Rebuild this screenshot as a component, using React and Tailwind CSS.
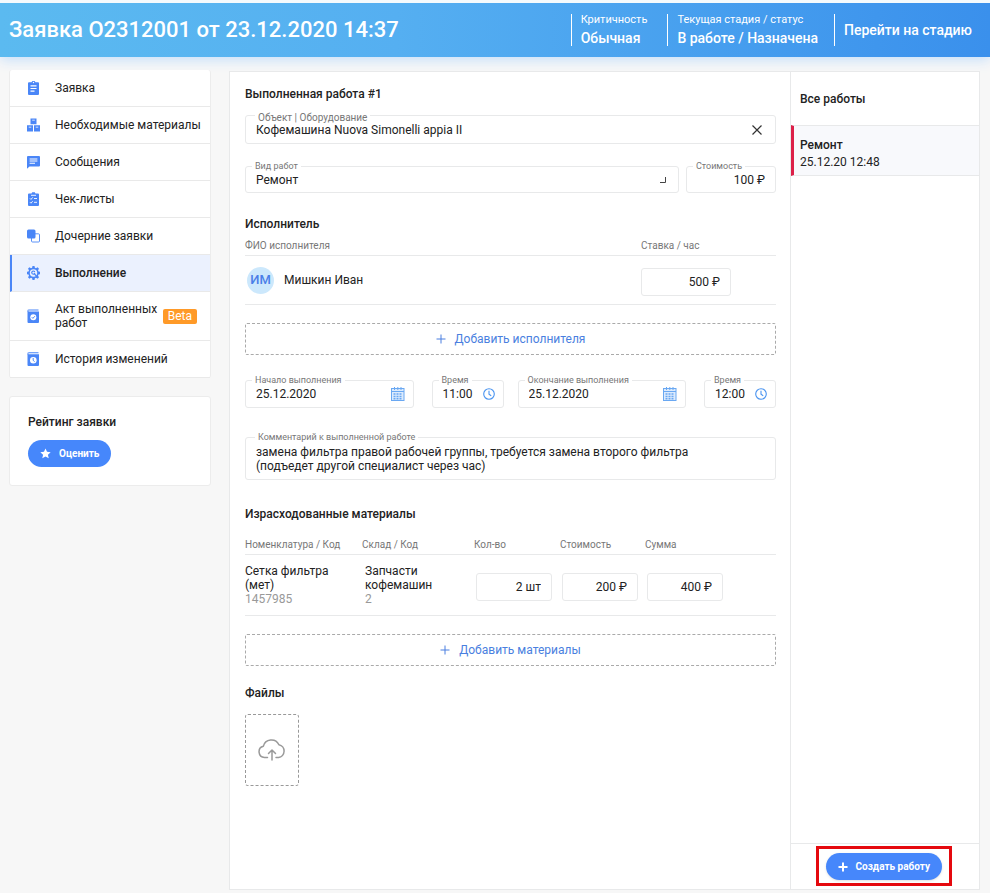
import React, { useState } from "react";

const icons = {
  request: (
    <g>
      <path fill="currentColor" fillRule="evenodd" d="M2 1.2h2.6a2 2 0 0 1 3.8 0H11a1 1 0 0 1 1 1V13a1 1 0 0 1-1 1H2a1 1 0 0 1-1-1V2.200a1 1 0 0 1 1-1zM6.500.8a.7.7 0 1 0 0 1.400a.7.7 0 0 0 0-1.400zM3.500 4.200v1.200h6V4.200zm0 2.700v1.200h6V6.900zm0 2.700v1.200h4V9.600z" />
    </g>
  ),
  materials: (
    <g fill="currentColor">
      <path fillRule="evenodd" d="M3.500.5h6v5.800h-6zM5.200 1.800v.8h2.600v-.8z" />
      <path fillRule="evenodd" d="M0 7.200h6v6.300H0zM1.700 8.700v.8h2.600v-.8z" />
      <path fillRule="evenodd" d="M7 7.200h6v6.300H7zM8.700 8.700v.8h2.600v-.8z" />
    </g>
  ),
  messages: (
    <path fill="currentColor" fillRule="evenodd" d="M1 1h11a1 1 0 0 1 1 1v8.500a1 1 0 0 1-1 1H2.500L0 13.800V2a1 1 0 0 1 1-1zM2.600 3.400v1h7.800v-1zm0 2.200v1h7.800v-1zm0 2.200v1h5.400v-1z" />
  ),
  checklist: (
    <g>
      <path fill="currentColor" d="M2 1.500h2.500L5.200.2h2.600l.7 1.300H11a1 1 0 0 1 1 1V13a1 1 0 0 1-1 1H2a1 1 0 0 1-1-1V2.500a1 1 0 0 1 1-1z" />
      <path fill="none" stroke="#fff" strokeWidth=".9" d="M4 3.300h5M3 6.400l1 1 1.700-2M7 6.500h3M3 10.200l1 1 1.700-2M7 10.300h3" />
    </g>
  ),
  children: (
    <g>
      <rect x="4.500" y="4.800" width="8" height="8.200" rx="1" fill="#fff" stroke="currentColor" strokeWidth=".9" />
      <rect x="0" y=".5" width="8.500" height="9" rx="1.500" fill="currentColor" />
    </g>
  ),
  work: (
    <g>
      <path fill="currentColor" d="M5.500 0h2l.4 1.800 1.100.5 1.600-1 1.400 1.400-1 1.600.5 1.100 1.500.4v2.400l-1.500.4-.5 1.100 1 1.600-1.400 1.400-1.600-1-1.100.5-.4 1.800h-2l-.4-1.800-1.100-.5-1.600 1L1 11.300l1-1.600-.5-1.100L0 8.200V5.800l1.500-.4.5-1.100-1-1.600 1.400-1.400 1.600 1 1.100-.5z" />
      <circle cx="6.500" cy="7" r="3.700" fill="#ebf1fe" />
      <path fill="none" stroke="currentColor" strokeWidth="1.200" strokeLinecap="round" d="M7.200 7.700l2.200 2.300M7.500 5.500a1.600 1.600 0 1 0 .2 2" />
    </g>
  ),
  act: (
    <g>
      <path fill="currentColor" d="M1.500.5h10v1h-10zM.5 2.500h11.500V13a1 1 0 0 1-1 1H1.500a1 1 0 0 1-1-1z" />
      <path fill="currentColor" d="M.5 1.500a1 1 0 0 1 1-1v2.500h-1z" />
      <circle cx="6.300" cy="8.200" r="3" fill="#fff" />
      <path fill="none" stroke="currentColor" strokeWidth="1" d="M4.800 8.200l1.100 1.200 2-2.200" />
    </g>
  ),
  history: (
    <g>
      <path fill="currentColor" d="M1.500.3h10v1h-10zM.5 2.300h11.500V13a1 1 0 0 1-1 1H1.500a1 1 0 0 1-1-1z" />
      <path fill="currentColor" d="M.5 1.300a1 1 0 0 1 1-1v2.500h-1z" />
      <circle cx="6.300" cy="8.200" r="3.300" fill="#fff" />
      <path fill="none" stroke="currentColor" strokeWidth="1" d="M6.200 6v2.400l1.400 1.200" />
    </g>
  ),
};

const menu = [
  { icon: "request", text: "Заявка" },
  { icon: "materials", text: "Необходимые материалы" },
  { icon: "messages", text: "Сообщения" },
  { icon: "checklist", text: "Чек-листы" },
  { icon: "children", text: "Дочерние заявки" },
  { icon: "work", text: "Выполнение", active: true },
  { icon: "act", text: "Акт выполненных работ", badge: "Beta" },
  { icon: "history", text: "История изменений" },
];

function MenuItem({ item }) {
  const tone = item.active
    ? "border-l-2 border-l-[#4a86f7] bg-[#ebf1fe] pl-[15px] font-medium"
    : "pl-[17px]";
  const height = item.badge ? "h-[49px] pr-[13px]" : "h-[37px] pr-2";
  return (
    <li>
      <a
        href="#"
        aria-current={item.active ? "page" : undefined}
        className={`flex items-center border-b border-[#e9e9e9] ${height} ${tone}`}
      >
        <svg viewBox="0 0 13 14" className="mr-[15px] h-[14px] w-[13px] shrink-0 text-[#4a86f7]">
          {icons[item.icon]}
        </svg>
        <span className="flex-1 leading-[14px]">{item.text}</span>
        {item.badge && (
          <span className="rounded-xs bg-[#ff9a28] px-[5px] text-xs leading-[15px] text-white">{item.badge}</span>
        )}
      </a>
    </li>
  );
}

const inputClass = "w-full min-w-0 bg-transparent outline-none";

function Field({ id, label, labelClass = "-top-[6px] left-[6px] text-[9px]", className = "", children }) {
  return (
    <div className={`relative flex items-center rounded-[3px] border border-[#e8e9ea] px-[10px] ${className}`}>
      <label
        htmlFor={id}
        className={`absolute bg-white px-[3px] leading-[11px] whitespace-nowrap text-[#777] ${labelClass}`}
      >
        {label}
      </label>
      {children}
    </div>
  );
}

function CalendarIcon() {
  return (
    <svg viewBox="0 0 14 14" className="mr-[-2px] h-[14px] w-[14px] shrink-0" fill="none" stroke="#6aa8f2">
      <rect x=".5" y="1.500" width="12.500" height="12" fill="#dcebfd" />
      <path d="M.5 4.500H13M3.500 0v3M6.800 0v3M10 0v3" />
      <path strokeWidth="1.500" strokeDasharray="2 1" d="M2.500 7h9M2.500 9.400h9M2.500 11.800h9" />
    </svg>
  );
}

function ClockIcon() {
  return (
    <svg viewBox="0 0 12 12" className="mr-[-2px] h-[12px] w-[12px] shrink-0" fill="none" stroke="#4a94f0" strokeWidth="1.100">
      <circle cx="6" cy="6" r="5.300" />
      <path d="M6 2.800v3.400l2.200 1.500" />
    </svg>
  );
}

function PlusIcon({ className }) {
  return (
    <svg viewBox="0 0 10 10" className={`h-[10px] w-[10px] ${className}`} fill="none" stroke="currentColor">
      <path d="M5 .5v9M.5 5h9" />
    </svg>
  );
}

function AddButton({ children }) {
  return (
    <button
      type="button"
      className="flex h-[32px] w-full items-center justify-center gap-[9px] rounded-xs border border-dashed border-[#aaa] text-[#4a7fe0]"
    >
      <PlusIcon className="stroke-1" />
      {children}
    </button>
  );
}

function AmountInput({ label, value, className }) {
  return (
    <input
      type="text"
      aria-label={label}
      defaultValue={value}
      className={`block h-[28px] rounded-[3px] border border-[#e8e9ea] bg-white px-[10px] text-right outline-none ${className}`}
    />
  );
}

function DateTime({ id, label, date, time }) {
  return (
    <div className="flex flex-1 gap-[18px]">
      <Field id={`${id}-date`} label={label} className="h-[28px] flex-1">
        <input id={`${id}-date`} type="text" defaultValue={date} className={inputClass} />
        <CalendarIcon />
      </Field>
      <Field id={`${id}-time`} label="Время" className="h-[28px] w-[72px]">
        <input id={`${id}-time`} type="text" defaultValue={time} className={inputClass} />
        <ClockIcon />
      </Field>
    </div>
  );
}

function WorkForm() {
  const [object, setObject] = useState("Кофемашина Nuova Simonelli appia II");
  const th = "pb-[4px] text-left align-bottom text-[10px] leading-[11px] font-normal text-[#777]";
  return (
    <form className="min-w-0 flex-1 pt-[14px] pr-[14px] pb-4 pl-[15px]">
      <h2 className="leading-[16px] font-medium">Выполненная работа #1</h2>
      <Field
        id="object"
        label="Объект | Оборудование"
        labelClass="-top-[4px] left-[9px] text-[10px]"
        className="mt-[13px] h-[29px]"
      >
        <input
          id="object"
          type="text"
          value={object}
          onChange={(e) => setObject(e.target.value)}
          className={inputClass}
        />
        <button type="button" aria-label="Очистить" onClick={() => setObject("")} className="px-[3px]">
          <svg viewBox="0 0 10 10" className="h-[10px] w-[10px]" fill="none" stroke="#333" strokeWidth="1.200">
            <path d="M.5.5l9 9M9.500.5l-9 9" />
          </svg>
        </button>
      </Field>
      <div className="mt-[22px] flex gap-[7px]">
        <Field id="kind" label="Вид работ" className="h-[27px] flex-1">
          <select id="kind" className={`${inputClass} appearance-none`}>
            <option>Ремонт</option>
          </select>
          <svg viewBox="0 0 6 6" className="mr-[2px] h-[6px] w-[6px] shrink-0" fill="none" stroke="#444">
            <path d="M5.500 0v5.500H0" />
          </svg>
        </Field>
        <Field id="price" label="Стоимость" className="h-[27px] w-[90px]">
          <input id="price" type="text" defaultValue="100 ₽" className={`${inputClass} text-right`} />
        </Field>
      </div>

      <h2 className="mt-[23px] leading-[16px] font-medium">Исполнитель</h2>
      <table className="mt-[8px] w-full table-fixed border-collapse">
        <thead>
          <tr className="border-b border-[#e8e9ea]">
            <th className={th}>ФИО исполнителя</th>
            <th className={`w-[135px] ${th}`}>Ставка / час</th>
          </tr>
        </thead>
        <tbody>
          <tr className="h-[49px] border-b border-[#e8e9ea]">
            <td>
              <div className="flex items-center gap-[10px] pl-[2px]">
                <span className="flex h-[27px] w-[27px] items-center justify-center rounded-full bg-[#cce8fc] text-[13px] font-medium text-[#4a7fe8]">
                  ИМ
                </span>
                Мишкин Иван
              </div>
            </td>
            <td className="pt-[3px]">
              <AmountInput label="Ставка / час" value="500 ₽" className="w-[90px]" />
            </td>
          </tr>
        </tbody>
      </table>
      <div className="mt-[18px]">
        <AddButton>Добавить исполнителя</AddButton>
      </div>

      <div className="mt-[25px] flex gap-[14px]">
        <DateTime id="start" label="Начало выполнения" date="25.12.2020" time="11:00" />
        <DateTime id="end" label="Окончание выполнения" date="25.12.2020" time="12:00" />
      </div>

      <Field
        id="comment"
        label="Комментарий к выполненной работе"
        labelClass="-top-[6px] left-[9px] text-[9px]"
        className="mt-[29px] h-[43px]"
      >
        <textarea
          id="comment"
          className="mt-[2px] h-[30px] w-full resize-none overflow-hidden bg-transparent leading-[14px] outline-none"
          defaultValue={"замена фильтра правой рабочей группы, требуется замена второго фильтра\n(подъедет другой специалист через час)"}
        />
      </Field>

      <h2 className="mt-[26px] leading-[16px] font-medium">Израсходованные материалы</h2>
      <table className="mt-[17px] w-full table-fixed border-collapse">
        <thead>
          <tr className="border-b border-[#e8e9ea]">
            <th className={`w-[117px] ${th}`}>Номенклатура / Код</th>
            <th className={`w-[112px] ${th}`}>Склад / Код</th>
            <th className={`w-[86px] ${th}`}>Кол-во</th>
            <th className={`w-[85px] ${th}`}>Стоимость</th>
            <th className={th}>Сумма</th>
          </tr>
        </thead>
        <tbody>
          <tr className="h-[61px] border-b border-[#e8e9ea] leading-[14px]">
            <td className="pr-5">
              Сетка фильтра (мет)
              <div className="text-[#999]">1457985</div>
            </td>
            <td className="pr-5 pl-[3px]">
              Запчасти кофемашин
              <div className="text-[#999]">2</div>
            </td>
            <td className="pt-[3px] pl-[2px]">
              <AmountInput label="Кол-во" value="2 шт" className="w-[76px]" />
            </td>
            <td className="pt-[3px] pl-[2px]">
              <AmountInput label="Стоимость" value="200 ₽" className="w-[76px]" />
            </td>
            <td className="pt-[3px] pl-[2px]">
              <AmountInput label="Сумма" value="400 ₽" className="w-[76px]" />
            </td>
          </tr>
        </tbody>
      </table>
      <div className="mt-[18px]">
        <AddButton>Добавить материалы</AddButton>
      </div>

      <h2 className="mt-[19px] leading-[16px] font-medium">Файлы</h2>
      <button
        type="button"
        aria-label="Загрузить файл"
        className="mt-[13px] flex h-[72px] w-[54px] items-center justify-center rounded-[3px] border border-dashed border-[#999]"
      >
        <svg viewBox="0 0 28 22" className="h-[22px] w-[28px]" fill="none" stroke="#999" strokeWidth="1.500" strokeLinecap="round" strokeLinejoin="round">
          <path d="M9.500 18.500H6.500a5.700 5.700 0 0 1-1.200-11.200 8.300 8.300 0 0 1 15.600-1.600 6.500 6.500 0 0 1-.4 12.800H18" />
          <path d="M14 21V11.500M10.500 14.500 14 11l3.500 3.500" />
        </svg>
      </button>
    </form>
  );
}

function WorksList() {
  return (
    <aside className="flex w-[189px] shrink-0 flex-col border-l border-[#e8e9ea]">
      <h2 className="flex h-[53px] items-center px-[9px] font-medium">Все работы</h2>
      <a href="#" className="block border-y border-l-[3px] border-y-[#e8e9ea] border-l-[#dc2048] bg-[#f8f9fc] px-[6px] pt-[11px] pb-[4px] leading-[17px]">
        <div className="font-medium">Ремонт</div>
        <div>25.12.20 12:48</div>
      </a>
      <div className="mt-auto flex justify-end border-t border-[#e8e9ea] pt-[2px] pr-[27px] pb-[3px]">
        <div className="border-[3px] border-[#e5090e] px-[7px] pt-[4px] pb-[3px]">
          <button
            type="button"
            className="flex h-[27px] items-center gap-[8px] rounded-full bg-[#4687fb] px-[12px] text-[10px] font-bold text-white shadow-sm"
          >
            <PlusIcon className="stroke-2" />
            Создать работу
          </button>
        </div>
      </div>
    </aside>
  );
}

export default function App() {
  return (
    <div className="flex min-h-screen flex-col bg-[#f7f7f7] font-[Roboto,'Liberation_Sans',sans-serif] text-xs text-[#222]">
      <header className="flex h-[57px] items-center border-t-[3px] border-[#f4fafd] bg-linear-to-r from-[#5bbaf0] via-[#55aff1] via-40% to-[#3a90ec] pr-[18px] pl-[9px] text-white shadow-[0_3px_12px_#c5dffa]">
        <h1 className="flex-1 text-[22px] font-medium">Заявка О2312001 от 23.12.2020 14:37</h1>
        <div className="flex h-[32px] flex-col justify-between border-l border-white pr-[20px] pl-[9px]">
          <span className="text-[11px] leading-[12px]">Критичность</span>
          <span className="text-sm leading-[16px] font-medium">Обычная</span>
        </div>
        <div className="flex h-[32px] flex-col justify-between border-l border-white pr-4 pl-[9px]">
          <span className="text-[11px] leading-[12px]">Текущая стадия / статус</span>
          <span className="text-sm leading-[16px] font-medium">В работе / Назначена</span>
        </div>
        <div className="flex h-[32px] items-center border-l border-white pl-[9px]">
          <a href="#" className="text-sm font-medium">Перейти на стадию</a>
        </div>
      </header>

      <div className="flex flex-1 gap-[18px] pr-[10px] pb-[3px] pl-[9px]">
        <div className="w-[202px] shrink-0 pt-[13px]">
          <nav className="rounded-[3px] border-x border-[#ececec] bg-white">
            <ul>
              {menu.map((item) => (
                <MenuItem key={item.text} item={item} />
              ))}
            </ul>
          </nav>
          <section className="mt-[18px] h-[90px] rounded-[3px] border border-[#ececec] bg-white px-[18px] pt-[17px]">
            <h2 className="leading-[16px] font-medium">Рейтинг заявки</h2>
            <button
              type="button"
              className="mt-[10px] flex h-[27px] items-center gap-[8px] rounded-full bg-[#4687fb] px-[12px] text-[10px] font-bold text-white"
            >
              <svg viewBox="0 0 24 24" className="h-[11px] w-[11px]" fill="currentColor">
                <path d="M12 1l3.300 7.300 8 .9-6 5.300 1.700 7.900-7-4-7 4 1.700-7.900-6-5.300 8-.9z" />
              </svg>
              Оценить
            </button>
          </section>
        </div>

        <main className="mt-[14px] flex min-w-0 flex-1 border border-[#e8e9ea] bg-white">
          <WorkForm />
          <WorksList />
        </main>
      </div>
    </div>
  );
}
